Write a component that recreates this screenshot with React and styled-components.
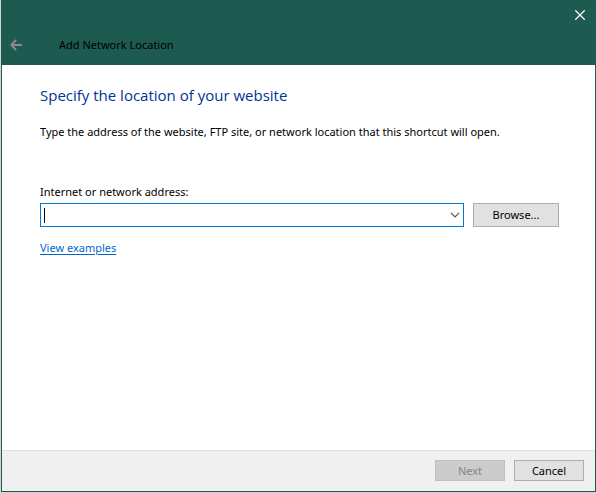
import React from "react";
import styled, { createGlobalStyle } from "styled-components";

const GlobalStyle = createGlobalStyle`
  * { box-sizing: border-box; }
  html, body, #root { height: 100%; }
  body {
    margin: 0;
    background: #d4d4d4;
    color: #000;
    font: 11px/16px "Segoe UI", "Noto Sans", sans-serif;
  }
  button, input { font: inherit; color: inherit; }
`;

const Desktop = styled.div`
  min-height: 100%;
  display: flex;
  padding: 0 0 1px 1px;
`;

const Dialog = styled.main`
  flex: 1;
  display: flex;
  flex-direction: column;
  background: #fff;
  border: 1px solid #1d5a50;
  border-top: 0;
`;

const Header = styled.header`
  height: 65px;
  display: flex;
  flex-direction: column;
  background: #1d5a50;
`;

const TitleBar = styled.div`
  display: flex;
  justify-content: flex-end;
  height: 30px;
`;

const NavRow = styled.div`
  display: flex;
  align-items: center;
  gap: 29px;
  height: 30px;
`;

const IconButton = styled.button`
  display: flex;
  align-items: center;
  justify-content: center;
  width: ${(p) => p.$width};
  height: 30px;
  padding: 0;
  border: 0;
  background: transparent;
  color: ${(p) => p.$tone};
`;

const Title = styled.span`
  color: #000;
`;

const Body = styled.section`
  flex: 1;
  padding: 19px 36px 20px 38px;
`;

const Heading = styled.h1`
  margin: 0 0 18px;
  font-family: "Segoe UI", "Open Sans", "Noto Sans", sans-serif;
  font-size: 15px;
  line-height: 22px;
  font-weight: 400;
  color: #003399;
`;

const Description = styled.p`
  margin: 0 0 44px;
`;

const FieldLabel = styled.label`
  display: block;
  margin-bottom: 3px;
`;

const FieldRow = styled.div`
  display: flex;
  align-items: center;
  gap: 9px;
  margin-bottom: 13px;
`;

const ComboBox = styled.div`
  flex: 1;
  display: flex;
  align-items: center;
  height: 24px;
  padding: 0 1px 0 3px;
  border: 1px solid #0078d7;
  background: #fff;
`;

const Caret = styled.span`
  width: 1px;
  height: 15px;
  background: #000;
`;

const AddressInput = styled.input`
  flex: 1;
  min-width: 0;
  padding: 0;
  border: 0;
  outline: 0;
  background: transparent;
`;

const DropButton = styled.button`
  display: flex;
  align-items: center;
  justify-content: center;
  width: 14px;
  height: 20px;
  padding: 0;
  border: 0;
  background: transparent;
  color: #555;
`;

const Button = styled.button`
  width: ${(p) => p.$width || "70px"};
  height: ${(p) => p.$height || "21px"};
  padding: 0;
  line-height: 16px;
  border: 1px solid #adadad;
  background: #e1e1e1;
  &:disabled {
    border-color: #bfbfbf;
    background: #cccccc;
    color: #838383;
  }
`;

const ExampleLink = styled.a`
  color: #0066cc;
  text-decoration: underline;
  text-underline-offset: 2px;
`;

const Footer = styled.footer`
  display: flex;
  justify-content: flex-end;
  gap: 9px;
  height: 41px;
  padding: 9px 11px 0 0;
  border-top: 1px solid #dfdfdf;
  background: #f0f0f0;
`;

export default function App() {
  return (
    <Desktop>
      <GlobalStyle />
      <Dialog>
        <Header>
          <TitleBar>
            <IconButton $width="30px" $tone="#fff" aria-label="Close">
              <svg width="10" height="10" viewBox="0 0 10 10" fill="none" stroke="currentColor" strokeWidth="1.3">
                <path d="M.3.3l9.4 9.4M9.7.3L.3 9.7" />
              </svg>
            </IconButton>
          </TitleBar>
          <NavRow>
            <IconButton $width="28px" $tone="#8b8b8b" aria-label="Back" disabled>
              <svg width="12" height="12" viewBox="0 0 12 12" fill="none" stroke="currentColor" strokeWidth="2">
                <path d="M12 6H1.4M6 1L1.4 6 6 11" />
              </svg>
            </IconButton>
            <Title>Add Network Location</Title>
          </NavRow>
        </Header>
        <Body>
          <Heading>Specify the location of your website</Heading>
          <Description>
            Type the address of the website, FTP site, or network location that this shortcut will open.
          </Description>
          <FieldLabel htmlFor="address">Internet or network address:</FieldLabel>
          <FieldRow>
            <ComboBox>
              <Caret />
              <AddressInput id="address" type="text" />
              <DropButton aria-label="Show addresses">
                <svg width="10" height="6" viewBox="0 0 10 6" fill="none" stroke="currentColor" strokeWidth="1.2">
                  <path d="M1 .8l4 4 4-4" />
                </svg>
              </DropButton>
            </ComboBox>
            <Button $width="86px" $height="24px">Browse...</Button>
          </FieldRow>
          <ExampleLink href="#examples">View examples</ExampleLink>
        </Body>
        <Footer>
          <Button disabled>Next</Button>
          <Button>Cancel</Button>
        </Footer>
      </Dialog>
    </Desktop>
  );
}
